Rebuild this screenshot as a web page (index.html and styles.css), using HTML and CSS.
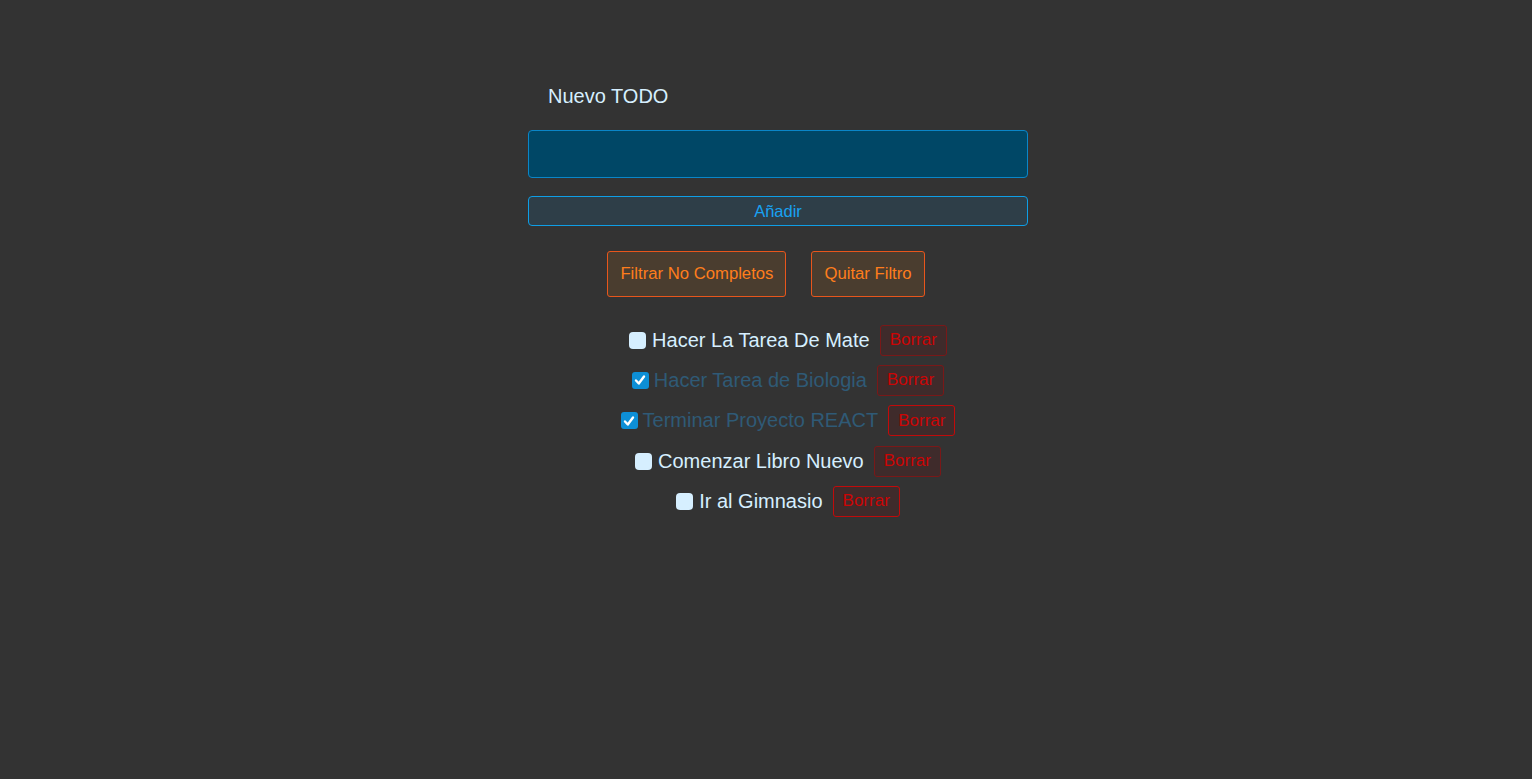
FILE: index.html
```html
<!DOCTYPE html>
<html lang="es">
<head>
<meta charset="utf-8">
<title>TODO</title>
<link rel="stylesheet" href="styles.css">
</head>
<body>
<main class="app">
  <form class="new-form">
    <label class="new-label" for="nuevo">Nuevo TODO</label>
    <input class="new-input" id="nuevo" type="text">
    <button class="add-btn" type="button">Añadir</button>
  </form>
  <div class="filters">
    <button class="filter-btn" type="button">Filtrar No Completos</button>
    <button class="filter-btn" type="button">Quitar Filtro</button>
  </div>
  <ul class="todo-list">
    <li class="todo">
      <span class="box"></span>
      <span class="todo-text">Hacer La Tarea De Mate</span>
      <button class="del-btn dim" type="button">Borrar</button>
    </li>
    <li class="todo done">
      <span class="box checked"><svg viewBox="0 0 16 16" width="16" height="16"><path d="M4 8.5 L6.8 11.5 L12 4.5" fill="none" stroke="#fff" stroke-width="2.4" stroke-linecap="round" stroke-linejoin="round"/></svg></span>
      <span class="todo-text">Hacer Tarea de Biologia</span>
      <button class="del-btn dim" type="button">Borrar</button>
    </li>
    <li class="todo done">
      <span class="box checked"><svg viewBox="0 0 16 16" width="16" height="16"><path d="M4 8.5 L6.8 11.5 L12 4.5" fill="none" stroke="#fff" stroke-width="2.4" stroke-linecap="round" stroke-linejoin="round"/></svg></span>
      <span class="todo-text">Terminar Proyecto REACT</span>
      <button class="del-btn" type="button">Borrar</button>
    </li>
    <li class="todo">
      <span class="box"></span>
      <span class="todo-text">Comenzar Libro Nuevo</span>
      <button class="del-btn dim" type="button">Borrar</button>
    </li>
    <li class="todo">
      <span class="box"></span>
      <span class="todo-text">Ir al Gimnasio</span>
      <button class="del-btn" type="button">Borrar</button>
    </li>
  </ul>
</main>
</body>
</html>
```
FILE: styles.css
```css
html, body {
  margin: 0;
  padding: 0;
  background: #333333;
  min-height: 100%;
}
body {
  font-family: "Liberation Sans", Arial, sans-serif;
  color: #d6efff;
  min-height: 779px;
}
.app {
  display: flex;
  flex-direction: column;
  align-items: center;
  padding-top: 84px;
}
.new-form {
  display: flex;
  flex-direction: column;
  width: 500px;
  margin-left: 24px;
}
.new-label {
  font-size: 20px;
  line-height: 24px;
  height: 24px;
  padding-left: 20px;
  color: #d6efff;
}
.new-input {
  margin-top: 22px;
  height: 48px;
  box-sizing: border-box;
  background: #004766;
  border: 1px solid #0a86c8;
  border-radius: 4px;
  color: #d6efff;
  font-size: 18px;
  padding: 0 10px;
  outline: none;
}
.add-btn {
  margin-top: 18px;
  height: 30px;
  box-sizing: border-box;
  background: #2e3e48;
  border: 1px solid #0e9ee6;
  border-radius: 4px;
  color: #18a2f2;
  font-family: "Liberation Sans", Arial, sans-serif;
  font-size: 16.5px;
  padding: 0;
}
.filters {
  display: flex;
  gap: 25px;
  margin-top: 25px;
}
.filter-btn {
  height: 46px;
  box-sizing: border-box;
  padding: 0 12px;
  background: #4a3d2f;
  border: 1px solid #e8561c;
  border-radius: 3px;
  color: #ff7d1c;
  font-family: "Liberation Sans", Arial, sans-serif;
  font-size: 16.7px;
}
.todo-list {
  list-style: none;
  margin: 23px 0 0;
  padding: 0 0 0 44px;
  display: flex;
  flex-direction: column;
  align-items: center;
}
.todo {
  display: flex;
  align-items: center;
  height: 40.3px;
  font-size: 20px;
}
.box {
  width: 17px;
  height: 17px;
  border-radius: 4px;
  background: #d6efff;
  margin-right: 6px;
  display: flex;
  align-items: center;
  justify-content: center;
}
.box.checked {
  width: 17px;
  height: 17px;
  border-radius: 3px;
  background: #0d8fd6;
  margin-right: 5px;
}
.todo-text {
  color: #d6efff;
}
.done .todo-text {
  color: #2f5a76;
}
.del-btn {
  margin-left: 10px;
  height: 31px;
  box-sizing: border-box;
  padding: 0 9px;
  background: #3f2b2b;
  border: 1px solid #c20a0a;
  border-radius: 3px;
  color: #cc0505;
  font-family: "Liberation Sans", Arial, sans-serif;
  font-size: 17px;
}
.del-btn.dim {
  border-color: #7a1818;
}
```
